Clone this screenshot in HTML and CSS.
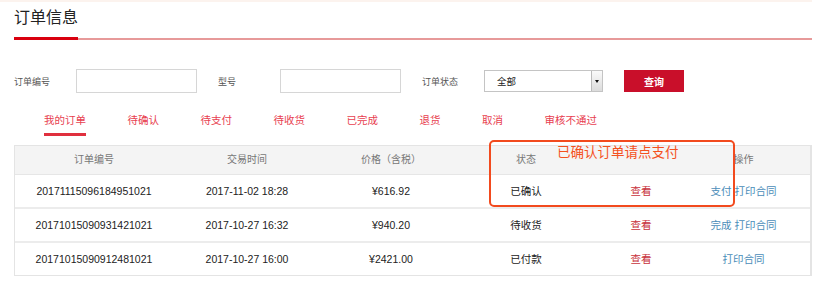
FILE: index.html
```html
<!DOCTYPE html>
<html lang="zh-CN">
<head>
    <meta charset="UTF-8">
    <title>订单信息</title>
    <link rel="stylesheet" href="styles.css">
</head>
<body>
    <div class="top-line"></div>

    <div class="main-content">
        <div class="page-head">
            <h1 class="page-title">订单信息</h1>
            <div class="head-rest"></div>
        </div>

        <!-- Search filters -->
        <form class="filters">
            <label class="filter-label">订单编号</label>
            <input type="text" class="filter-input">
            <label class="filter-label">型号</label>
            <input type="text" class="filter-input">
            <label class="filter-label">订单状态</label>
            <div class="select-box">
                <select class="filter-select">
                    <option>全部</option>
                    <option>待确认</option>
                    <option>待支付</option>
                </select>
                <span class="select-arrow"></span>
            </div>
            <button type="button" class="btn-search">查询</button>
        </form>

        <!-- Status tabs -->
        <div class="tabs">
            <a class="tab active">我的订单</a>
            <a class="tab">待确认</a>
            <a class="tab">待支付</a>
            <a class="tab">待收货</a>
            <a class="tab">已完成</a>
            <a class="tab">退货</a>
            <a class="tab">取消</a>
            <a class="tab">审核不通过</a>
        </div>

        <div class="table-wrap">
            <table class="order-table">
                <thead>
                    <tr>
                        <th class="col-no">订单编号</th>
                        <th class="col-time">交易时间</th>
                        <th class="col-price">价格（含税）</th>
                        <th class="col-status">状态</th>
                        <th class="col-view"></th>
                        <th class="col-ops">操作</th>
                    </tr>
                </thead>
                <tbody>
                    <tr>
                        <td>20171115096184951021</td>
                        <td>2017-11-02 18:28</td>
                        <td>¥616.92</td>
                        <td>已确认</td>
                        <td><a class="link-view">查看</a></td>
                        <td class="ops"><a class="link-op">支付</a> <a class="link-op">打印合同</a></td>
                    </tr>
                    <tr>
                        <td>20171015090931421021</td>
                        <td>2017-10-27 16:32</td>
                        <td>¥940.20</td>
                        <td>待收货</td>
                        <td><a class="link-view">查看</a></td>
                        <td class="ops"><a class="link-op">完成</a> <a class="link-op">打印合同</a></td>
                    </tr>
                    <tr>
                        <td>20171015090912481021</td>
                        <td>2017-10-27 16:00</td>
                        <td>¥2421.00</td>
                        <td>已付款</td>
                        <td><a class="link-view">查看</a></td>
                        <td class="ops"><a class="link-op">打印合同</a></td>
                    </tr>
                </tbody>
            </table>

            <!-- Annotation box -->
            <div class="callout">已确认订单请点支付</div>
        </div>
    </div>
</body>
</html>
```

FILE: styles.css
```css
body {
    font-family: "Liberation Sans", "Noto Sans CJK SC", sans-serif;
    margin: 0;
    padding: 0;
    background-color: #fff;
    color: #222;
}

.top-line {
    width: 812px;
    height: 2px;
    background: #fcf3ee;
}

.main-content {
    width: 798px;
    margin-left: 14px;
}

/* Title */
.page-head {
    display: flex;
    align-items: flex-end;
}

.page-title {
    margin: 0;
    font-size: 16px;
    font-weight: normal;
    line-height: 20px;
    padding: 6px 0 9px;
    color: #222;
    border-bottom: 3px solid #d9000f;
}

.head-rest {
    flex: 1;
    border-bottom: 2px solid #e79a9a;
}

/* Filters */
.filters {
    display: flex;
    align-items: center;
    margin-top: 29px;
    height: 24px;
}

.filter-label {
    width: 62px;
    font-size: 9px;
    color: #555;
}

.filter-input {
    width: 121px;
    height: 24px;
    box-sizing: border-box;
    border: 1px solid #d6d6d6;
    margin: 0 21px 0 0;
    padding: 0;
}

.select-box {
    display: flex;
    width: 119px;
    height: 22px;
    box-sizing: border-box;
    border: 1px solid #c4c4c4;
    background: #fff;
}

.filter-select {
    flex: 1;
    appearance: none;
    border: none;
    background: transparent;
    font-family: inherit;
    font-size: 9.5px;
    color: #222;
    padding: 0 0 0 12px;
    outline: none;
}

.select-arrow {
    width: 10px;
    border-left: 1px solid #bbb;
    background: linear-gradient(#fafafa, #dcdcdc);
    display: flex;
    align-items: center;
    justify-content: center;
}

.select-arrow::after {
    content: "";
    border-left: 2.5px solid transparent;
    border-right: 2.5px solid transparent;
    border-top: 3px solid #111;
}

.btn-search {
    margin-left: 21px;
    width: 60px;
    height: 22px;
    border: none;
    background: #c90f2a;
    color: #fff;
    font-family: inherit;
    font-size: 10px;
    font-weight: bold;
    padding: 0;
}

/* Tabs */
.tabs {
    display: flex;
    gap: 41.5px;
    padding-left: 30px;
    margin-top: 20px;
}

.tab {
    font-size: 10.5px;
    line-height: 14px;
    color: #e8404f;
    padding-bottom: 6px;
    border-bottom: 3px solid transparent;
}

.tab.active {
    border-bottom-color: #e0303e;
}

/* Table */
.table-wrap {
    position: relative;
    margin-top: 9px;
}

.order-table {
    width: 798px;
    border-collapse: separate;
    border-spacing: 0;
    border: 1px solid #e4e4e4;
    border-right-width: 2px;
    font-size: 10.5px;
    table-layout: fixed;
}

.order-table th {
    background: #f4f4f4;
    color: #777;
    font-weight: normal;
    font-size: 10px;
    line-height: 28px;
    padding: 0;
    border-bottom: 1px solid #e6e6e6;
    text-align: center;
}

.order-table td {
    line-height: 32px;
    padding: 0;
    text-align: center;
    border-bottom: 2px solid #ececec;
    color: #222;
}

.order-table tbody tr:last-child td {
    border-bottom: none;
}

.col-no { width: 158px; }
.col-time { width: 148px; }
.col-price { width: 140px; }
.col-status { width: 130px; }
.col-view { width: 100px; }

.order-table .col-ops,
.order-table .ops {
    padding-right: 14px;
}

.link-view {
    color: #c8323c;
}

.link-op {
    color: #4b8db9;
}

/* Annotation */
.callout {
    position: absolute;
    left: 475px;
    top: -5px;
    width: 246px;
    height: 67px;
    box-sizing: border-box;
    border: 2px solid #f24a1e;
    border-radius: 5px;
    padding: 2px 0 0 66px;
    font-size: 13.5px;
    line-height: 18px;
    color: #f4511e;
}
```
